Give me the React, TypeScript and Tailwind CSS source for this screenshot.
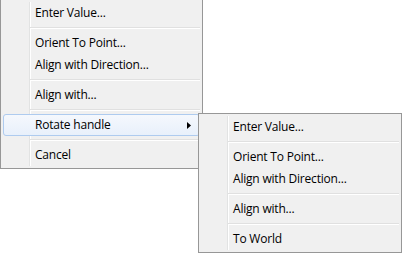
import React from "react";

type Entry = { label?: string; sep?: boolean; hot?: boolean; sub?: boolean };

const mainItems: Entry[] = [
    { label: "Enter Value..." },
    { sep: true },
    { label: "Orient To Point..." },
    { label: "Align with Direction..." },
    { sep: true },
    { label: "Align with..." },
    { sep: true },
    { label: "Rotate handle", hot: true, sub: true },
    { sep: true },
    { label: "Cancel" },
];

const subItems: Entry[] = [
    { label: "Enter Value..." },
    { sep: true },
    { label: "Orient To Point..." },
    { label: "Align with Direction..." },
    { sep: true },
    { label: "Align with..." },
    { sep: true },
    { label: "To World" },
];

const Menu = ({ items }: { items: Entry[] }) => {
    return (
        <div className="relative border border-[#979797] bg-[#f0f0f0] p-[2px]">
            {/* gutter line */}
            <div className="absolute top-[2px] bottom-[2px] left-[28px] w-[2px] flex">
                <div className="w-px bg-[#e2e3e3]" />
                <div className="w-px bg-white" />
            </div>
            <div className="relative flex flex-col">
                {items.map((it, i) =>
                    it.sep ? (
                        <div key={i} className="h-[8px] pl-[27px] flex flex-col justify-center">
                            <div className="h-px bg-[#e0e0e0]" />
                            <div className="h-px bg-white" />
                        </div>
                    ) : (
                        <div
                            key={i}
                            className={
                                it.hot
                                    ? "relative h-[22px] flex items-center pl-[31px] rounded-[3px] border border-[#aecbef] bg-linear-to-b from-[#f5f8fd] to-[#e8f0fb]"
                                    : "relative h-[22px] flex items-center pl-[32px]"
                            }
                        >
                            <span className="text-[12px] tracking-[-0.2px] text-black leading-none">{it.label}</span>
                            {it.sub && (
                                <svg className="absolute right-[8px] top-[7px]" width="4" height="7" viewBox="0 0 4 7">
                                    <path d="M0 0 L4 3.5 L0 7 Z" fill="#000" />
                                </svg>
                            )}
                        </div>
                    )
                )}
            </div>
        </div>
    );
};

const App = () => {
    return (
        <div
            className="relative w-[403px] h-[253px] bg-white overflow-hidden"
            style={{ fontFamily: '"Open Sans", "Noto Sans", sans-serif' }}
        >
            <div className="absolute left-0 top-[-1px] w-[203px]">
                <Menu items={mainItems} />
            </div>
            <div className="absolute left-[198px] top-[113px] w-[204px]">
                <Menu items={subItems} />
            </div>
        </div>
    );
};

export default App;
